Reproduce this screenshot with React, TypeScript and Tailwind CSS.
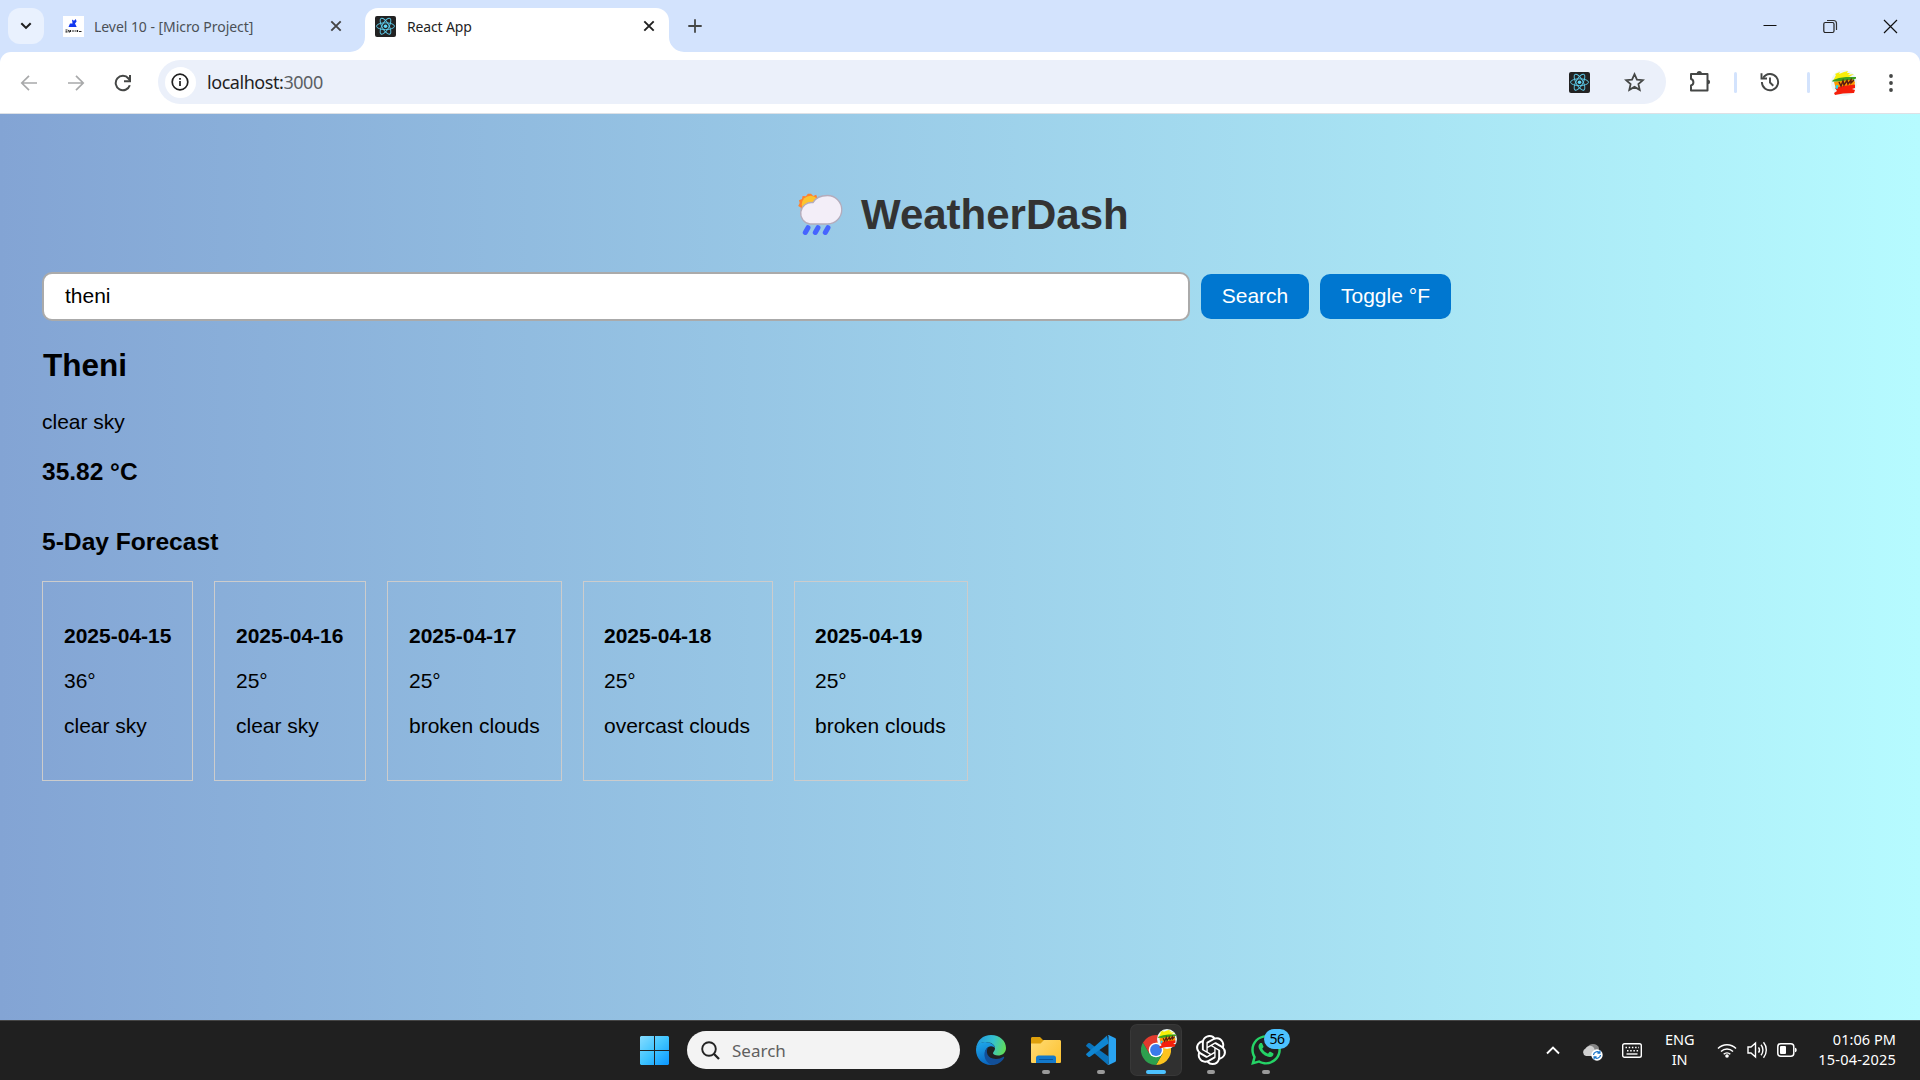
import React from "react";
import { SiOpenai } from "react-icons/si";
import { FaWhatsapp } from "react-icons/fa";

type Day = { date: string; temp: string; sky: string; box: string };

const days: Day[] = [
  { date: "2025-04-15", temp: "36°", sky: "clear sky", box: "w-[151px] mr-[21px] pl-[21px]" },
  { date: "2025-04-16", temp: "25°", sky: "clear sky", box: "w-[152px] mr-[21px] pl-[21px]" },
  { date: "2025-04-17", temp: "25°", sky: "broken clouds", box: "w-[175px] mr-[21px] pl-[21px]" },
  { date: "2025-04-18", temp: "25°", sky: "overcast clouds", box: "w-[190px] mr-[21px] pl-[20px]" },
  { date: "2025-04-19", temp: "25°", sky: "broken clouds", box: "w-[174px] pl-[20px]" },
];

function ReactLogo() {
  return (
    <svg viewBox="0 0 21 21" className="h-[21px] w-[21px] shrink-0">
      <rect width="21" height="21" rx="2" fill="#222" />
      <g fill="none" stroke="#5cc9e8" strokeWidth="0.95">
        <ellipse cx="10.5" cy="10.2" rx="9" ry="3.4" />
        <ellipse cx="10.5" cy="10.2" rx="9" ry="3.4" transform="rotate(60 10.5 10.2)" />
        <ellipse cx="10.5" cy="10.2" rx="9" ry="3.4" transform="rotate(120 10.5 10.2)" />
      </g>
      <circle cx="10.5" cy="10.2" r="1.8" fill="#61dafb" />
    </svg>
  );
}

function Doodle({ className }: { className: string }) {
  return (
    <svg viewBox="0 0 26 26" className={className}>
      <circle cx="13" cy="13" r="13" fill="#ecf7f8" />
      <path d="M2 11 5 5 4 4 9 2 8 4 13 2 17 1 16 3 19 3 17 5 23 4 18 7 24 7 12 11Z" fill="#f7ee08" />
      <path d="M2 10 8 8 15 7 25 7 25 8.500 20 11 12 12 1 11.500Z" fill="#3aa01c" />
      <path d="M3 12 22 9.500 24 12 23 17 5 19Z" fill="#ff9800" />
      <path d="M4 18 12 16 24 14.500 24 18 21 19 24 20 23 23 12 23.500 4 25 3 23 6 21Z" fill="#f51f0b" />
      <path d="M8 12 10 16 12 11 13 15 16 10.500 17 14 20 10 20 13 23 10" fill="none" stroke="#5b1c10" strokeWidth="1.5" />
      <path d="M5 15l2.500.5-1 3.500-2-.5Z" fill="#2ad0ee" />
    </svg>
  );
}

function CloseX({ color }: { color: string }) {
  return (
    <svg viewBox="0 0 12 12" className="h-3 w-3 shrink-0">
      <path d="M1.3 1.3l9.4 9.4M10.7 1.3l-9.4 9.4" stroke={color} strokeWidth="1.9" fill="none" />
    </svg>
  );
}

function TabStrip() {
  return (
    <div className="flex h-[52px] w-full items-start bg-[#d3e3fd]">
      <div className="mt-2 ml-2 flex h-9 w-9 items-center justify-center rounded-xl bg-[#e9f1fe]">
        <svg viewBox="0 0 12 8" className="h-2 w-3">
          <path d="M1.3 1.3 6 5.9l4.7-4.6" fill="none" stroke="#1f1f1f" strokeWidth="2.1" />
        </svg>
      </div>
      <div className="mt-2 ml-[19px] flex h-9 w-[287px] items-center">
        <svg viewBox="0 0 21 21" className="h-[21px] w-[21px] shrink-0">
          <rect width="21" height="21" fill="#fff" />
          <path d="M5.500 11 7 7.500h2.500L9 3.500l2 1.300 1.800-1.800.8 2.500-1.600 2 1.700 3.500Z" fill="#1238f0" />
          <path d="M2.500 14h2M2.500 15.800h2M5.500 14l1 2.500M7.500 14v2M9 15h2M11.500 15h2M14.500 14v2M16 15.500h2.500" stroke="#222" strokeWidth="1.200" />
        </svg>
        <span className="mt-[2px] ml-[10px] w-[226px] font-['Noto_Sans'] text-[14px] leading-5 tracking-[-0.05px] whitespace-nowrap text-[#4b5057]">Level 10 - [Micro Project]</span>
        <span className="ml-[10px]"><CloseX color="#444" /></span>
      </div>
      <div className="flex h-[52px] items-end">
        <svg viewBox="0 0 15 15" className="h-[15px] w-[15px]"><path d="M15 0v15H0A15 15 0 0 0 15 0Z" fill="#fff" /></svg>
        <div className="flex h-11 w-[304px] items-start rounded-t-[13px] bg-white pt-2 pl-[10px]">
          <ReactLogo />
          <span className="mt-px ml-[11px] w-[226px] font-['Noto_Sans'] text-[14px] leading-5 tracking-[-0.15px] whitespace-nowrap text-[#1f1f1f]">React App</span>
          <span className="mt-[4px] ml-[10px]"><CloseX color="#1f1f1f" /></span>
        </div>
        <svg viewBox="0 0 15 15" className="h-[15px] w-[15px]"><path d="M0 0v15h15A15 15 0 0 1 0 0Z" fill="#fff" /></svg>
      </div>
      <svg viewBox="0 0 14 14" className="mt-[19px] ml-1 h-[14px] w-[14px]"><path d="M7 .3v13.400M.3 7h13.400" stroke="#454746" strokeWidth="1.8" /></svg>
      <div className="mt-[19px] mr-[22px] ml-auto flex items-start">
        <svg viewBox="0 0 14 14" className="h-[14px] w-[14px]"><path d="M.5 6.500h13" stroke="#111" strokeWidth="1" /></svg>
        <svg viewBox="0 0 15 15" className="ml-[46px] h-[15px] w-[15px]">
          <path d="M4 1.500h6.500a3 3 0 0 1 3 3V11" fill="none" stroke="#333" strokeWidth="1.200" />
          <rect x=".8" y="3.500" width="10.200" height="10" rx="1.500" fill="none" stroke="#222" strokeWidth="1.200" />
        </svg>
        <svg viewBox="0 0 15 15" className="ml-[45px] h-[15px] w-[15px]"><path d="M1 1l13 13M14 1 1 14" stroke="#111" strokeWidth="1.200" /></svg>
      </div>
    </div>
  );
}

function Toolbar() {
  return (
    <div className="bg-[#d3e3fd]">
      <div className="flex h-[62px] items-center rounded-t-[11px] border-b border-[#dde1e6] bg-white">
        <svg viewBox="0 0 18 18" className="ml-5 h-[18px] w-[18px]"><path d="M17 9H2.500M9 1.800 1.800 9 9 16.200" fill="none" stroke="#a8a9aa" strokeWidth="1.700" /></svg>
        <svg viewBox="0 0 18 18" className="ml-[29px] h-[18px] w-[18px]"><path d="M1 9h14.500M9 1.800 16.200 9 9 16.200" fill="none" stroke="#a8a9aa" strokeWidth="1.700" /></svg>
        <svg viewBox="0 0 18 18" className="ml-[29px] h-[18px] w-[18px]">
          <path d="M15.800 11.200A7.200 7.200 0 1 1 14.500 4.500L16 6.300" fill="none" stroke="#454746" strokeWidth="2" />
          <path d="M16 1v6.200H10" fill="none" stroke="#454746" strokeWidth="2" />
        </svg>
        <div className="-mt-px ml-[26px] flex h-11 w-[1508px] items-center rounded-full bg-[#ebf0fa]">
          <div className="ml-[7px] flex h-[31px] w-[31px] items-center justify-center rounded-full bg-white">
            <svg viewBox="0 0 18 18" className="-ml-px h-[18px] w-[18px]">
              <circle cx="9" cy="9" r="7.800" fill="none" stroke="#1f1f1f" strokeWidth="1.700" />
              <path d="M9 8v5M9 5v1.700" stroke="#1f1f1f" strokeWidth="1.700" />
            </svg>
          </div>
          <span className="ml-[11px] font-['Noto_Sans'] text-[18px] leading-6 tracking-[-0.45px] text-[#1f1f1f]">localhost:<span className="text-[#5b5f64]">3000</span></span>
          <div className="mr-[21px] ml-auto flex items-center gap-[34px]">
            <ReactLogo />
            <svg viewBox="0 0 21 21" className="h-[21px] w-[21px]">
              <path d="M10.500 2.200l2.450 5.400 5.900.6-4.450 3.900 1.300 5.800-5.200-3.050-5.200 3.050 1.300-5.800L2.150 8.200l5.900-.6Z" fill="none" stroke="#454746" strokeWidth="1.800" />
            </svg>
          </div>
        </div>
        <svg viewBox="0 0 24 24" className="-mt-[3px] ml-[22px] h-6 w-6">
          <path d="M3 5H19.500V21.500H3V16.500A3.400 3.400 0 0 0 3 10Z" fill="none" stroke="#454746" strokeWidth="2" strokeLinejoin="round" />
          <path d="M8.700 4.500a2.600 2.600 0 0 1 5.200 0ZM19.800 10.700a2.300 2.300 0 0 1 0 4.600Z" fill="#454746" />
        </svg>
        <div className="ml-[22px] h-[21px] w-[3px] rounded-full bg-[#d3e3fd]" />
        <svg viewBox="0 0 20 20" className="-mt-px ml-[23px] h-5 w-5">
          <path d="M1.900 10A8.100 8.100 0 1 0 3.200 5.700" fill="none" stroke="#454746" strokeWidth="1.900" />
          <path d="M1.500 1.200V6.500H7M10 5.500v5l3.300 3.200" fill="none" stroke="#454746" strokeWidth="1.900" />
        </svg>
        <div className="ml-[27px] h-[21px] w-[3px] rounded-full bg-[#d3e3fd]" />
        <Doodle className="ml-[21px] h-[26px] w-[26px]" />
        <svg viewBox="0 0 4 20" className="ml-8 h-5 w-1">
          <circle cx="2" cy="3" r="1.900" fill="#454746" /><circle cx="2" cy="10" r="1.900" fill="#454746" /><circle cx="2" cy="17" r="1.900" fill="#454746" />
        </svg>
      </div>
    </div>
  );
}

function RainCloud() {
  return (
    <svg viewBox="0 0 46 44" className="h-[44px] w-[46px]">
      <path d="M13 .8l2.200 2.200 3-1.200 1.100 2.900 3.100.5-.4 3.300-14 11-5-1.500-.2-3.600-2.600-1.500 1.500-2.800L1 7.300l3-1.200.6-3.200 3.300.3 2-2.400Z" fill="#ff822d" />
      <circle cx="12.500" cy="11.500" r="8.800" fill="#fcc430" />
      <path d="M12 31A10.700 10.700 0 1 1 15 9.600C17.500 5 22 2.500 29.500 2.500a14.200 14.200 0 0 1 0 28.500Z" fill="#f3eef8" stroke="#b4acbc" strokeWidth="1.300" />
      <g stroke="#4664ff" strokeWidth="5" strokeLinecap="round"><path d="M10 34.700 7.300 39.500M20 34.700l-2.700 4.800M30 34.700l-2.700 4.800" /></g>
    </svg>
  );
}

function Dashboard() {
  return (
    <main className="h-[906px] bg-linear-to-r/srgb from-[#83a4d4] to-[#b6fbff] px-[42px] pt-[76px] font-['Liberation_Sans',sans-serif] text-[21px] text-black">
      <h1 className="ml-[756px] flex h-[50px] items-center text-[42px] leading-[50px] font-bold text-[#333]">
        <RainCloud />
        <span className="ml-[17px]">WeatherDash</span>
      </h1>
      <div className="mt-8 flex items-center">
        <div className="flex h-[49px] w-[1148px] items-center rounded-[10px] border-2 border-[#aaa] bg-white pb-[2px] pl-[21px]">theni</div>
        <button className="ml-[11px] h-[45px] w-[108px] rounded-[10px] bg-[#0077d0] pb-[2px] text-white">Search</button>
        <button className="ml-[11px] h-[45px] w-[131px] rounded-[10px] bg-[#0077d0] pb-[2px] text-white">Toggle °F</button>
      </div>
      <h2 className="mt-[26px] ml-px h-[36px] text-[31.500px] leading-[36px] font-bold">Theni</h2>
      <p className="mt-[27px] h-6 leading-6">clear sky</p>
      <h3 className="mt-[24px] h-7 text-[24.500px] leading-7 font-bold">35.82 °C</h3>
      <h3 className="mt-[42px] h-7 text-[24.600px] leading-7 font-bold">5-Day Forecast</h3>
      <div className="mt-[25px] flex">
        {days.map((d) => (
          <div key={d.date} className={`${d.box} h-[200px] border border-[#ccc] pt-[42px] whitespace-nowrap`}>
            <p className="mb-[21px] h-6 leading-6 font-bold">{d.date}</p>
            <p className="mb-[21px] h-6 leading-6">{d.temp}</p>
            <p className="h-6 leading-6">{d.sky}</p>
          </div>
        ))}
      </div>
    </main>
  );
}

function TaskIcon({ children, state }: { children: React.ReactNode; state?: "open" | "active" }) {
  return (
    <div className={`relative mr-[5px] flex h-[50px] w-[50px] flex-col items-center rounded-md pt-[10px] ${state === "active" ? "bg-[#303030] ring-1 ring-[#383838]" : ""}`}>
      {children}
      {state === "open" && <div className="mt-[5px] h-1 w-2 rounded-full bg-[#9a9a9a]" />}
      {state === "active" && <div className="mt-[5px] h-1 w-5 rounded-full bg-[#4cc2ff]" />}
    </div>
  );
}

function Taskbar() {
  return (
    <footer className="flex h-[60px] items-start border-t border-[#454545] bg-[#202020] font-['Noto_Sans',sans-serif] text-white">
      <svg viewBox="0 0 29 29" className="mt-[15px] ml-[640px] h-[29px] w-[29px]">
        <defs>
          <linearGradient id="win" x1="0" y1="0" x2="29" y2="29" gradientUnits="userSpaceOnUse"><stop stopColor="#86dcff" /><stop offset=".5" stopColor="#3fc4ff" /><stop offset="1" stopColor="#0a96ff" /></linearGradient>
        </defs>
        <path d="M1 0h13v14H0V1ZM15 0h13l1 1v13H15ZM0 15h14v14H1l-1-1ZM15 15h14v13l-1 1H15Z" fill="url(#win)" />
      </svg>
      <div className="mt-[10px] ml-[18px] flex h-[38px] w-[273px] items-center rounded-full bg-[#f3f3f3] pl-[14px]">
        <svg viewBox="0 0 19 19" className="h-[19px] w-[19px]"><circle cx="8" cy="8" r="6.800" fill="none" stroke="#222" strokeWidth="1.900" /><path d="M12.800 12.800 18 18" stroke="#222" strokeWidth="2.300" /></svg>
        <span className="mt-[2px] ml-3 text-[17px] leading-6 text-[#5f5f5f]">Search</span>
      </div>
      <div className="mt-1 ml-[6px] flex">
        <TaskIcon>
          <svg viewBox="0 0 30 30" className="h-[30px] w-[30px]">
            <defs>
              <linearGradient id="edgeTop" x1="2" y1="8" x2="29" y2="16" gradientUnits="userSpaceOnUse"><stop stopColor="#249fe0" /><stop offset=".5" stopColor="#35c1cf" /><stop offset="1" stopColor="#62dd54" /></linearGradient>
              <linearGradient id="edgeLeft" x1="5" y1="8" x2="12" y2="30" gradientUnits="userSpaceOnUse"><stop stopColor="#1ca4e8" /><stop offset="1" stopColor="#0a63bd" /></linearGradient>
            </defs>
            <path d="M0 14C1 5 7 0 15 0c9 0 15 6 15 13 0 5-4 7.500-8 7.500-3 0-5-1-5-2.200C17 17 19 16 19 13.500 19 9 14 7 9 7 5 7 1 10 0 14Z" fill="url(#edgeTop)" />
            <path d="M0 15C0 10 4 7 9 7c6 0 10 3 10 6.500 0-1-2-2.300-4-2.300-4 0-6 4-6 7C9 24 14 29 19 29.400 9 32 0 25 0 15Z" fill="url(#edgeLeft)" />
            <path d="M12.500 11.800C9 16 11 24 20 24c3 0 5-1 7-2 1-.5 1.500 0 1 .9C26 27 21 30 16 30 9 28 5 17 12.500 11.800Z" fill="#124f98" />
          </svg>
        </TaskIcon>
        <TaskIcon state="open">
          <svg viewBox="0 0 30 30" className="h-[30px] w-[30px]">
            <defs><linearGradient id="folder" x1="0" y1="5" x2="30" y2="30" gradientUnits="userSpaceOnUse"><stop stopColor="#ffdc75" /><stop offset="1" stopColor="#fcc02e" /></linearGradient></defs>
            <path d="M0 3.500C0 2.500.7 2 1.500 2H9l3 3h13v6H0Z" fill="#dea00c" />
            <path d="M0 8.500h9.500L13 5h15.500c1 0 1.500.7 1.500 1.500v20c0 1-.5 1.500-1.500 1.500h-27C.5 28 0 27.500 0 26.500Z" fill="url(#folder)" />
            <path d="M5 28v-5a2.500 2.500 0 0 1 2.500-2.500h15A2.500 2.500 0 0 1 25 23v5Z" fill="#1379cb" />
            <path d="M8.500 24.500h13" stroke="#07549b" strokeWidth="1.200" strokeLinecap="round" />
          </svg>
        </TaskIcon>
        <TaskIcon state="open">
          <svg viewBox="0 0 30 30" className="h-[30px] w-[30px]">
            <path d="M2.300 8.200.6 9.700c-.6.6-.6 1.300 0 1.900L22 30l.5-8.500L4 8.200c-.6-.4-1.200-.4-1.700 0Z" fill="#0a74bd" />
            <path d="M2.300 21.800.6 20.300c-.6-.6-.6-1.300 0-1.900L21 .5l1.500 8L4 21.800c-.6.4-1.200.4-1.700 0Z" fill="#0f86d2" />
            <path d="M21.500.2c.6-.3 1.200-.2 1.700 0l5.800 2.800c.6.300 1 .8 1 1.500v21c0 .7-.4 1.200-1 1.500l-5.800 2.800c-.6.300-1.200.2-1.700-.2.600.3 1-.1 1-.8V1.200c0-.7-.4-1.200-1-1Z" fill="#29a3f1" />
          </svg>
        </TaskIcon>
        <TaskIcon state="active">
          <svg viewBox="0 0 30 30" className="h-[30px] w-[30px]">
            <path d="M15 15 2.010 7.500A15 15 0 0 1 27.990 7.500Z" fill="#e33b2e" />
            <path d="M15 7.500H28A15 15 0 0 1 15 30L21.500 18.750Z" fill="#fcc31e" />
            <path d="M2 7.500A15 15 0 0 0 15 30L21.500 18.750 8.500 18.750Z" fill="#2da04e" />
            <path d="M2 7.500 8.500 18.750 15 15V5Z" fill="#e33b2e" />
            <circle cx="15" cy="15" r="7.300" fill="#fff" /><circle cx="15" cy="15" r="5.900" fill="#3b7bea" />
          </svg>
          <Doodle className="absolute top-[4px] left-[26px] h-5 w-5" />
        </TaskIcon>
        <TaskIcon state="open"><SiOpenai className="h-[30px] w-[30px]" /></TaskIcon>
        <TaskIcon state="open">
          <FaWhatsapp className="-mx-1 -my-[2px] h-[34px] w-[34px] text-[#25d366]" />
          <span className="absolute top-[4px] left-[23px] flex h-5 w-[26px] items-center justify-center rounded-full bg-[#4cc2ff] text-[14px] leading-5 tracking-[-0.5px] text-black">56</span>
        </TaskIcon>
      </div>
      <div className="mt-1 mr-6 ml-auto flex h-[50px] items-center">
        <svg viewBox="0 0 14 9" className="h-[9px] w-[14px]"><path d="M1 7.500 7 1.500l6 6" fill="none" stroke="#fff" strokeWidth="1.900" /></svg>
        <svg viewBox="0 0 21 18" className="mt-1 ml-[22px] h-[18px] w-[21px]">
          <path d="M5 5a6.500 6.500 0 0 1 12 0l-1 8H7Z" fill="#858585" />
          <path d="M4 13a4 4 0 0 1-.5-7.500A5 5 0 0 1 12 5l3 8Z" fill="#d0d0d0" />
          <circle cx="15" cy="12" r="5.700" fill="#fff" />
          <path d="M11.500 12a3.500 3.500 0 0 1 6-2.200M18.500 12a3.500 3.500 0 0 1-6 2.200M17.900 7.500v2.700h-2.500M12.100 16.500v-2.700h2.500" fill="none" stroke="#1673c8" strokeWidth="1.200" />
        </svg>
        <svg viewBox="0 0 20 15" className="ml-[19px] h-[15px] w-5">
          <rect x=".7" y=".7" width="18.600" height="13.600" rx="1.800" fill="none" stroke="#fff" strokeWidth="1.400" />
          <path d="M3.500 4.500H17M5 7.700h12" stroke="#fff" strokeWidth="1.500" strokeDasharray="1.500 1.700" /><path d="M4.500 11h11" stroke="#fff" strokeWidth="1.400" />
        </svg>
        <div className="-mt-[2px] ml-[23px] w-[29px] text-center text-[14.500px] leading-5 tracking-[-0.1px] whitespace-nowrap">ENG<br />IN</div>
        <svg viewBox="0 0 20 15" className="ml-[23px] h-[15px] w-5">
          <path d="M1 5.500a12.700 12.700 0 0 1 18 0M4 8.500a8.500 8.500 0 0 1 12 0M6.700 11.300a4.700 4.700 0 0 1 6.600 0" fill="none" stroke="#fff" strokeWidth="1.500" /><circle cx="10" cy="13" r="1.800" fill="#fff" />
        </svg>
        <svg viewBox="0 0 20 18" className="ml-[10px] h-[18px] w-5">
          <path d="M1 6v6h3l4.500 4V2L4 6ZM11.500 6.300a4.500 4.500 0 0 1 0 5.400M14 3.800a8 8 0 0 1 0 10.400M16.500 1.300a12 12 0 0 1 0 15.400" fill="none" stroke="#fff" strokeWidth="1.400" />
        </svg>
        <svg viewBox="0 0 20 14" className="ml-[10px] h-[14px] w-5">
          <rect x=".8" y=".8" width="16" height="12.400" rx="3" fill="none" stroke="#fff" strokeWidth="1.500" /><rect x="3" y="3" width="6" height="8" rx="1" fill="#fff" /><path d="M18 4.700c2.300 0 2.300 4.600 0 4.600Z" fill="#fff" />
        </svg>
        <div className="-mt-[3px] ml-[20px] flex w-[79px] flex-col items-end text-[14.500px] leading-5 whitespace-nowrap">
          <span className="tracking-[0.05px]">01:06 PM</span>
          <span className="tracking-[0.2px]">15-04-2025</span>
        </div>
      </div>
    </footer>
  );
}

export default function App() {
  return (
    <div className="flex h-[1080px] w-[1920px] flex-col overflow-hidden">
      <TabStrip />
      <Toolbar />
      <Dashboard />
      <Taskbar />
    </div>
  );
}
